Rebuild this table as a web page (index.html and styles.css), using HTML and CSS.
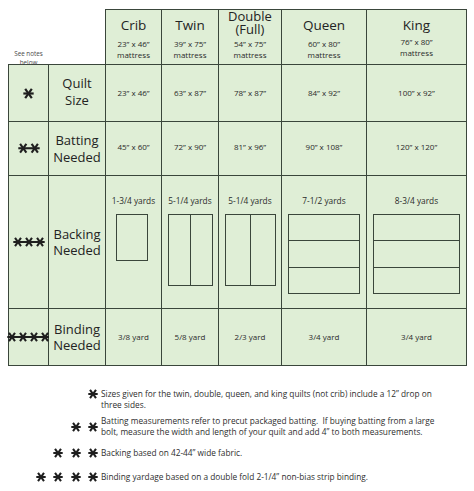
FILE: index.html
```html
<!DOCTYPE html>
<html lang="en">
<head>
<meta charset="utf-8">
<title>Quilt Size Chart</title>
<link rel="stylesheet" href="styles.css">
</head>
<body>
<svg class="defs" width="0" height="0" aria-hidden="true">
  <defs>
    <symbol id="ast" viewBox="0 0 10 10">
      <line x1="0.3" y1="5" x2="9.7" y2="5"/>
      <line x1="2" y1="0.8" x2="8" y2="9.2"/>
      <line x1="8" y1="0.8" x2="2" y2="9.2"/>
    </symbol>
  </defs>
</svg>

<div class="chart">
  <div class="cell blank hint"><div class="hint-text">See notes<br>below</div></div>
  <div class="cell blank blank-2"></div>
  <div class="cell head"><div class="title">Crib</div><div class="dim">23” x 46”</div><div class="mat">mattress</div></div>
  <div class="cell head"><div class="title">Twin</div><div class="dim">39” x 75”</div><div class="mat">mattress</div></div>
  <div class="cell head"><div class="title two">Double<br>(Full)</div><div class="dim">54” x 75”</div><div class="mat">mattress</div></div>
  <div class="cell head"><div class="title">Queen</div><div class="dim">60” x 80”</div><div class="mat">mattress</div></div>
  <div class="cell head king"><div class="title">King</div><div class="dim">76” x 80”</div><div class="mat">mattress</div></div>

  <div class="cell first mark">
    <svg class="group" width="11" height="11" viewBox="0 0 10 10"><line x1="0.3" y1="5" x2="9.7" y2="5"/><line x1="2" y1="0.8" x2="8" y2="9.2"/><line x1="8" y1="0.8" x2="2" y2="9.2"/></svg>
  </div>
  <div class="cell label label-up">Quilt<br>Size</div>
  <div class="cell val">23” x 46”</div>
  <div class="cell val">63” x 87”</div>
  <div class="cell val">78” x 87”</div>
  <div class="cell val">84” x 92”</div>
  <div class="cell val">100” x 92”</div>

  <div class="cell first mark">
    <svg class="group" width="22" height="10.5" viewBox="0 0 21 10"><line x1="0.3" y1="5" x2="20.7" y2="5"/><line x1="2" y1="0.8" x2="8" y2="9.2"/><line x1="8" y1="0.8" x2="2" y2="9.2"/><line x1="13" y1="0.8" x2="19" y2="9.2"/><line x1="19" y1="0.8" x2="13" y2="9.2"/></svg>
  </div>
  <div class="cell label">Batting<br>Needed</div>
  <div class="cell val val-up">45” x 60”</div>
  <div class="cell val val-up">72” x 90”</div>
  <div class="cell val val-up">81” x 96”</div>
  <div class="cell val val-up">90” x 108”</div>
  <div class="cell val val-up">120” x 120”</div>

  <div class="cell first mark">
    <svg class="group" width="32" height="10" viewBox="0 0 32 10"><line x1="0.3" y1="5" x2="31.7" y2="5"/><line x1="2" y1="0.8" x2="8" y2="9.2"/><line x1="8" y1="0.8" x2="2" y2="9.2"/><line x1="13" y1="0.8" x2="19" y2="9.2"/><line x1="19" y1="0.8" x2="13" y2="9.2"/><line x1="24" y1="0.8" x2="30" y2="9.2"/><line x1="30" y1="0.8" x2="24" y2="9.2"/></svg>
  </div>
  <div class="cell label">Backing<br>Needed</div>
  <div class="cell backing"><div class="yards">1-3/4 yards</div><div class="panel p-crib"></div></div>
  <div class="cell backing"><div class="yards">5-1/4 yards</div><div class="panel p-twin cols"><div class="part"></div><div class="part"></div></div></div>
  <div class="cell backing"><div class="yards">5-1/4 yards</div><div class="panel p-double cols"><div class="part"></div><div class="part"></div></div></div>
  <div class="cell backing"><div class="yards">7-1/2 yards</div><div class="panel p-queen rows"><div class="part"></div><div class="part"></div><div class="part"></div></div></div>
  <div class="cell backing"><div class="yards">8-3/4 yards</div><div class="panel p-king rows"><div class="part"></div><div class="part"></div><div class="part"></div></div></div>

  <div class="cell first mark">
    <svg class="group" width="43" height="10" viewBox="0 0 43 10"><line x1="0.3" y1="5" x2="42.7" y2="5"/><line x1="2" y1="0.8" x2="8" y2="9.2"/><line x1="8" y1="0.8" x2="2" y2="9.2"/><line x1="13" y1="0.8" x2="19" y2="9.2"/><line x1="19" y1="0.8" x2="13" y2="9.2"/><line x1="24" y1="0.8" x2="30" y2="9.2"/><line x1="30" y1="0.8" x2="24" y2="9.2"/><line x1="35" y1="0.8" x2="41" y2="9.2"/><line x1="41" y1="0.8" x2="35" y2="9.2"/></svg>
  </div>
  <div class="cell label">Binding<br>Needed</div>
  <div class="cell val">3/8 yard</div>
  <div class="cell val">5/8 yard</div>
  <div class="cell val">2/3 yard</div>
  <div class="cell val">3/4 yard</div>
  <div class="cell val">3/4 yard</div>
</div>

<div class="notes">
  <div class="note note-1">
    <div class="stars"><svg class="ast" viewBox="0 0 10 10"><use href="#ast"/></svg></div>
    <div class="note-text">Sizes given for the twin, double, queen, and king quilts (not crib) include a 12” drop on<br>three sides.</div>
  </div>
  <div class="note note-2">
    <div class="stars"><svg class="ast" viewBox="0 0 10 10"><use href="#ast"/></svg><svg class="ast" viewBox="0 0 10 10"><use href="#ast"/></svg></div>
    <div class="note-text">Batting measurements refer to precut packaged batting.&nbsp; If buying batting from a large<br>bolt, measure the width and length of your quilt and add 4” to both measurements.</div>
  </div>
  <div class="note note-3">
    <div class="stars"><svg class="ast" viewBox="0 0 10 10"><use href="#ast"/></svg><svg class="ast" viewBox="0 0 10 10"><use href="#ast"/></svg><svg class="ast" viewBox="0 0 10 10"><use href="#ast"/></svg></div>
    <div class="note-text">Backing based on 42-44” wide fabric.</div>
  </div>
  <div class="note note-4">
    <div class="stars"><svg class="ast" viewBox="0 0 10 10"><use href="#ast"/></svg><svg class="ast" viewBox="0 0 10 10"><use href="#ast"/></svg><svg class="ast" viewBox="0 0 10 10"><use href="#ast"/></svg><svg class="ast" viewBox="0 0 10 10"><use href="#ast"/></svg></div>
    <div class="note-text">Binding yardage based on a double fold 2-1/4” non-bias strip binding.</div>
  </div>
</div>
</body>
</html>
```

FILE: styles.css
```css
body {
  margin: 0;
  background: #ffffff;
  font-family: "Open Sans", "Liberation Sans", sans-serif;
  color: #2a2a2a;
}

.defs {
  position: absolute;
  width: 0;
  height: 0;
  overflow: hidden;
}

.chart {
  display: grid;
  grid-template-columns: 41px 57px 56px 57px 63px 85px 100px;
  grid-template-rows: 56px 57px 54px 133px 57px;
  width: 459px;
  margin: 9px 0 0 8px;
}

.cell {
  box-sizing: border-box;
  background: #dfeed6;
  border-right: 1px solid #3a463b;
  border-bottom: 1px solid #3a463b;
  display: flex;
  flex-direction: column;
  align-items: center;
  justify-content: center;
  text-align: center;
  overflow: visible;
}

.first {
  border-left: 1px solid #3a463b;
}

.blank {
  background: transparent;
  border-right: none;
}

.blank-2 {
  border-right: 1px solid #3a463b;
}

.hint {
  justify-content: flex-end;
}

.hint-text {
  font-size: 6.3px;
  line-height: 9px;
  color: #4a4a4a;
  margin-bottom: -3px;
}

.head {
  border-top: 1px solid #3a463b;
  justify-content: flex-start;
  padding-top: 1px;
}

.title {
  height: 28px;
  box-sizing: border-box;
  display: flex;
  align-items: center;
  justify-content: center;
  font-size: 13.5px;
  line-height: 14px;
  color: #232323;
}

.title.two {
  font-size: 13px;
  line-height: 13px;
  padding-bottom: 4px;
}

.dim {
  font-size: 8px;
  line-height: 10px;
}

.mat {
  font-size: 8px;
  line-height: 11px;
}

.king .dim {
  margin-top: -2px;
}

.label {
  font-size: 13px;
  line-height: 16.5px;
  color: #232323;
}

.label-up {
  padding-bottom: 3px;
}

.val {
  font-size: 8px;
  line-height: 10px;
}

.val-up {
  padding-bottom: 4px;
}

.group {
  overflow: visible;
  stroke: #1f1f1f;
  stroke-width: 2;
}

.ast {
  width: 10px;
  height: 10px;
  flex: none;
  overflow: visible;
  stroke: #1f1f1f;
  stroke-width: 2;
}

.backing {
  justify-content: flex-start;
  padding-top: 20px;
}

.yards {
  font-size: 8.3px;
  line-height: 10px;
  margin-bottom: 8px;
}

.panel {
  box-sizing: border-box;
  border: 1px solid #3a463b;
  display: flex;
}

.panel.cols {
  flex-direction: row;
}

.panel.rows {
  flex-direction: column;
}

.part {
  flex: 1;
}

.cols .part + .part {
  border-left: 1px solid #3a463b;
}

.rows .part + .part {
  border-top: 1px solid #3a463b;
}

.p-crib {
  width: 32px;
  height: 47px;
  margin-right: 4px;
}

.p-twin {
  width: 45px;
  height: 72px;
}

.p-double {
  width: 51px;
  height: 72px;
}

.p-queen {
  width: 72px;
  height: 80px;
}

.p-king {
  width: 87px;
  height: 80px;
}

.notes {
  margin-top: 22px;
}

.note {
  display: flex;
  align-items: center;
}

.note-1 {
  align-items: flex-start;
}

.note-2 {
  margin-top: 6px;
}

.note-3 {
  margin-top: 10px;
}

.note-4 {
  margin-top: 13px;
}

.stars {
  width: 98px;
  flex: none;
  display: flex;
  justify-content: flex-end;
  align-items: center;
  gap: 7.5px;
  height: 11px;
}

.note-text {
  padding-left: 3px;
  font-size: 8.3px;
  line-height: 11px;
  white-space: nowrap;
  color: #2e2e2e;
}

.note-2 .note-text {
  line-height: 10.5px;
}
```
